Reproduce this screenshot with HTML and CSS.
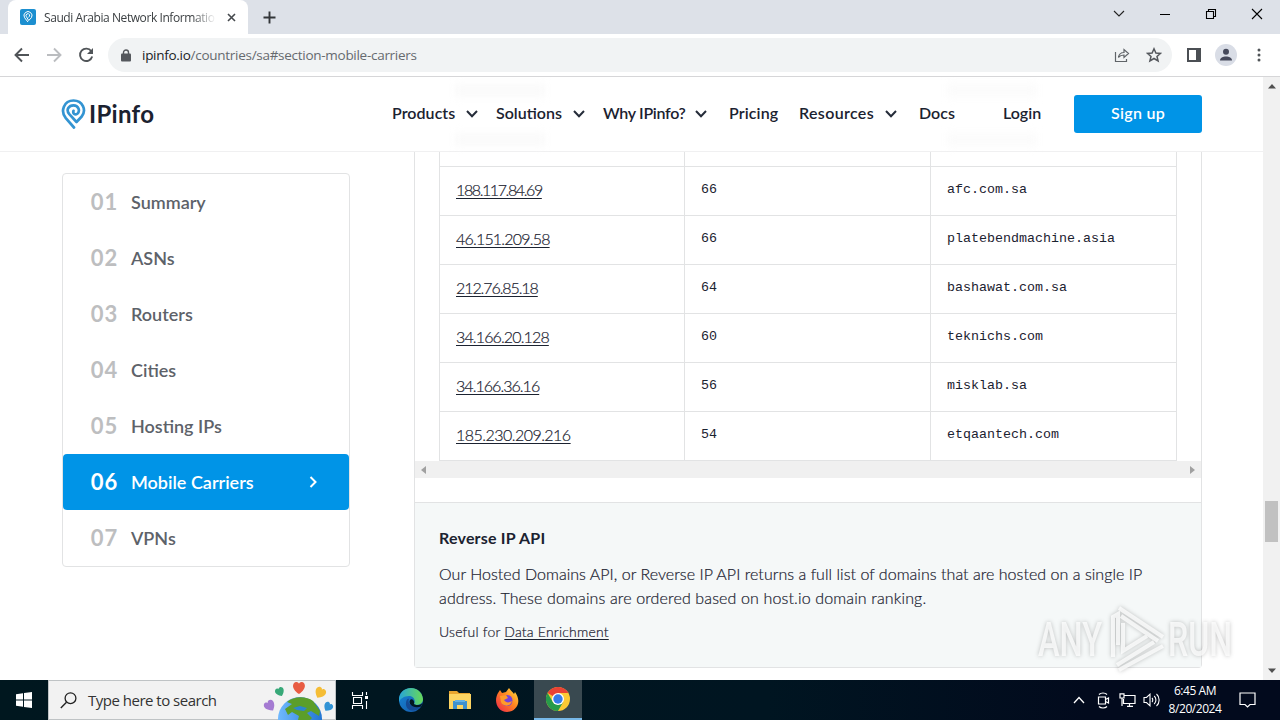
FILE: index.html
```html
<!DOCTYPE html>
<html lang="en">
<head>
  <meta charset="UTF-8" />
  <meta name="viewport" content="width=device-width, initial-scale=1" />
  <title>Saudi Arabia Network Information</title>
  <link rel="stylesheet" href="styles.css">
</head>
<body>

  <div class="tabs">
    <div class="tab">
      <svg class="favicon" width="16" height="16" viewBox="0 0 16 16"><rect width="16" height="16" rx="2" fill="#1c8fd0"/><path d="M8 13 4.6 8.7A4 4 0 1 1 11.4 8.7L8.7 11.5 6.4 7.6A1.8 1.8 0 1 1 8.4 8.2" fill="none" stroke="#fff" stroke-width="1"/></svg>
      <span class="tab-title">Saudi Arabia Network Informatio</span>
      <svg width="9" height="9" viewBox="0 0 9 9"><path d="M1 1 8 8M8 1 1 8" stroke="#45494d" stroke-width="1.6"/></svg>
    </div>
    <svg class="new-tab" width="13" height="13" viewBox="0 0 13 13"><path d="M6.500 .5V12.500M.5 6.500H12.500" stroke="#333639" stroke-width="1.9"/></svg>
    <div class="window-buttons">
      <svg width="12" height="12" viewBox="0 0 12 12"><path d="M1 3 6 8 11 3" fill="none" stroke="#222" stroke-width="1.1"/></svg>
      <svg width="12" height="12" viewBox="0 0 12 12"><path d="M1 6.500H11" stroke="#000"/></svg>
      <svg width="12" height="12" viewBox="0 0 12 12"><path d="M1.500 3.500H8.500V10.500H1.500ZM3.500 3.500V1.500H10.500V8.500H8.500" fill="none" stroke="#000" stroke-width="1.1"/></svg>
      <svg width="12" height="12" viewBox="0 0 12 12"><path d="M1 1 11 11M11 1 1 11" stroke="#000" stroke-width="1.1"/></svg>
    </div>
  </div>

  <div class="toolbar">
    <svg class="nav-icon" width="16" height="16" viewBox="0 0 16 16"><path d="M15 8H2M8 1.500 1.500 8 8 14.500" fill="none" stroke="#505458" stroke-width="1.900"/></svg>
    <svg class="nav-icon" width="16" height="16" viewBox="0 0 16 16"><path d="M1 8H14M8 1.500 14.500 8 8 14.500" fill="none" stroke="#bbbdc0" stroke-width="1.900"/></svg>
    <svg class="nav-icon" width="16" height="16" viewBox="0 0 16 16"><path d="M13.300 4.200A6.200 6.200 0 1 0 14.200 9.500" fill="none" stroke="#505458" stroke-width="1.900"/><path d="M15 1V7H9Z" fill="#505458"/></svg>
    <div class="address">
      <svg width="10" height="13" viewBox="0 0 10 13"><rect y="4.500" width="10" height="8" rx="1" fill="#55585d"/><path d="M2.500 5V3.500a2.500 2.500 0 0 1 5 0V5" fill="none" stroke="#55585d" stroke-width="1.400"/></svg>
      <span class="url"><b>ipinfo.io</b>/countries/sa#section-mobile-carriers</span>
      <svg class="share" width="16" height="16" viewBox="0 0 16 16"><path d="M1.500 5V14.500H12.500V12M4.500 10.500C5 7 7 5.500 10 5.500V2.500L14.500 6.500 10 10.500V8C7.500 8 6 8.500 4.500 10.500Z" fill="none" stroke="#606468" stroke-width="1.200"/></svg>
      <svg width="16" height="16" viewBox="0 0 16 16"><path d="M8 1.800 9.900 6 14.500 6.400 11 9.400 12.100 14 8 11.500 3.900 14 5 9.400 1.500 6.400 6.100 6Z" fill="none" stroke="#55585d" stroke-width="1.500"/></svg>
    </div>
    <svg class="panel" width="14" height="14" viewBox="0 0 14 14"><rect x="1" y="1" width="12" height="12" fill="none" stroke="#4b4f54" stroke-width="2"/><path d="M9 1H13V13H9Z" fill="#4b4f54"/></svg>
    <svg class="profile" width="22" height="22" viewBox="0 0 22 22"><circle cx="11" cy="11" r="11" fill="#d9dde6"/><circle cx="11" cy="7.800" r="3" fill="#45495b"/><path d="M5 16.500C5 11.300 17 11.300 17 16.500Z" fill="#45495b"/></svg>
    <svg width="4" height="14" viewBox="0 0 4 14"><circle cx="2" cy="2" r="1.500" fill="#505458"/><circle cx="2" cy="7" r="1.500" fill="#505458"/><circle cx="2" cy="12" r="1.500" fill="#505458"/></svg>
  </div>

  <div class="viewport">
    <div class="page">
      <header>
        <div class="ghost"></div>
        <div class="logo">
          <svg width="25" height="32" viewBox="0 0 25 32"><path d="M13 29.500 4.800 20.200C-1 13 3 2.500 12.500 2.500 21.500 2.500 26 12 20.500 18.800L15.500 24 8.300 16.200C4.500 11.500 8 7.300 12.500 7.300 17.500 7.300 19.500 13 16.300 15.700 14 17.500 11.500 15.500 12.500 12.800" fill="none" stroke="#3394d2" stroke-width="2.700" stroke-linejoin="round" stroke-linecap="round"/></svg>
          <span>IPinfo</span>
        </div>
        <nav>
          <a class="products">Products<svg class="chevron" viewBox="0 0 12 8"><path d="M1 1 6 6.200 11 1"/></svg></a>
          <a class="solutions">Solutions<svg class="chevron" viewBox="0 0 12 8"><path d="M1 1 6 6.200 11 1"/></svg></a>
          <a class="why">Why IPinfo?<svg class="chevron wide" viewBox="0 0 12 8"><path d="M1 1 6 6.200 11 1"/></svg></a>
          <a class="pricing">Pricing</a>
          <a class="resources">Resources<svg class="chevron wide" viewBox="0 0 12 8"><path d="M1 1 6 6.200 11 1"/></svg></a>
          <a class="docs">Docs</a>
          <a class="login">Login</a>
          <a class="btn">Sign up</a>
        </nav>
      </header>

      <main>
        <aside>
          <a><i>01</i>Summary</a>
          <a><i>02</i>ASNs</a>
          <a><i>03</i>Routers</a>
          <a><i>04</i>Cities</a>
          <a><i>05</i>Hosting IPs</a>
          <a class="active"><i>06</i>Mobile Carriers<svg width="8" height="12" viewBox="0 0 8 12"><path d="M1.500 1 6.500 6 1.500 11" fill="none" stroke="#fff" stroke-width="2"/></svg></a>
          <a><i>07</i>VPNs</a>
        </aside>

        <section class="card">
          <div class="table">
            <div class="row cut"><div></div><div></div><div></div></div>
            <div class="row"><div><u>188.117.84.69</u></div><div>66</div><div>afc.com.sa</div></div>
            <div class="row"><div><u>46.151.209.58</u></div><div>66</div><div>platebendmachine.asia</div></div>
            <div class="row"><div><u>212.76.85.18</u></div><div>64</div><div>bashawat.com.sa</div></div>
            <div class="row"><div><u>34.166.20.128</u></div><div>60</div><div>teknichs.com</div></div>
            <div class="row"><div><u>34.166.36.16</u></div><div>56</div><div>misklab.sa</div></div>
            <div class="row last"><div><u>185.230.209.216</u></div><div>54</div><div>etqaantech.com</div></div>
          </div>
          <div class="hscroll">
            <svg width="5" height="8" viewBox="0 0 5 8"><path d="M5 0V8L0 4Z" fill="#a0a0a0"/></svg>
            <svg width="5" height="8" viewBox="0 0 5 8"><path d="M0 0V8L5 4Z" fill="#a0a0a0"/></svg>
          </div>
          <div class="api">
            <h3>Reverse IP API</h3>
            <p><span class="line1">Our Hosted Domains API, or Reverse IP API returns a full list of domains that are hosted on a single IP</span><br><span class="line2">address. These domains are ordered based on host.io domain ranking.</span></p>
            <div class="useful">Useful for <u>Data Enrichment</u></div>
          </div>
        </section>
      </main>
    </div>

    <div class="vscroll">
      <svg width="8" height="5" viewBox="0 0 8 5"><path d="M0 4.500H8L4 0Z" fill="#505050"/></svg>
      <div class="thumb"></div>
      <svg width="8" height="5" viewBox="0 0 8 5"><path d="M0 .5H8L4 5Z" fill="#505050"/></svg>
    </div>

    <svg class="watermark" width="220" height="74" viewBox="0 0 220 74">
      <text x="8" y="51" textLength="64" lengthAdjust="spacingAndGlyphs">ANY</text>
      <path d="M83 52V12L88 9V40M89 3 133 32M91 11 128 36M93 18V46L117 31M133 41 89 65M124 37 87 60"/>
      <text x="138" y="51" textLength="64" lengthAdjust="spacingAndGlyphs">RUN</text>
    </svg>
  </div>

  <footer>
    <div class="start"><svg width="16" height="16" viewBox="0 0 16 16"><path d="M0 2.300 7 1.300V7.500H0ZM8 1.100 16 0V7.500H8ZM0 8.500H7V14.700L0 13.700ZM8 8.500H16V16L8 14.900Z" fill="#fff"/></svg></div>
    <div class="search">
      <svg width="17" height="17" viewBox="0 0 17 17"><circle cx="10.500" cy="6.200" r="5.400" fill="none" stroke="#222" stroke-width="1.300"/><path d="M6.500 10.200.8 16" stroke="#222" stroke-width="1.400"/></svg>
      <span>Type here to search</span>
      <svg class="earth" width="72" height="40" viewBox="0 0 72 40">
        <defs>
          <path id="heart" d="M0 6C-9 0-6-6-2.500-6-1-6 0-5 0-4 0-5 1-6 2.500-6 6-6 9 0 0 6Z"/>
          <linearGradient id="sea"><stop stop-color="#70b9ff"/><stop offset="1" stop-color="#2376d2"/></linearGradient>
        </defs>
        <circle cx="37" cy="39" r="22" fill="url(#sea)"/>
        <path d="M24 22C31 16 43 16 50 21L57 31 56 36 48 31 44 33 49 38 47 40H35L36 36 29 32 25 35 22 29 29 24Z" fill="#5b9e2a"/>
        <path d="M30 28 37 26 44 28 41 31 34 30Z" fill="#2c86cf"/>
        <use href="#heart" transform="translate(36 8)" fill="#e85c43"/>
        <use href="#heart" transform="translate(17 12) rotate(-25) scale(.75)" fill="#37a878"/>
        <use href="#heart" transform="translate(57 13) rotate(30) scale(.9)" fill="#f5bd35"/>
        <use href="#heart" transform="translate(7 26) rotate(-35) scale(.9)" fill="#a57bd2"/>
        <use href="#heart" transform="translate(65 27) rotate(35) scale(.75)" fill="#3193d5"/>
      </svg>
    </div>
    <div class="task"><svg width="18" height="17" viewBox="0 0 18 17"><path d="M1.500 0V3.500H11.500V0M1.500 17V13.500H11.500V17M2.500 5.500H10.500V11.500H2.500ZM15.500 0V3M15.500 9V17" fill="none" stroke="#fff" stroke-width="1.100"/><path d="M14 4H17V7H14Z" fill="#fff"/></svg></div>
    <div class="task edge"><svg width="24" height="24" viewBox="0 0 24 24">
      <defs><linearGradient id="eg1"><stop stop-color="#27a5d8"/><stop offset="1" stop-color="#68d957"/></linearGradient><linearGradient id="eg2" y2="1"><stop stop-color="#1688d8"/><stop offset="1" stop-color="#1557a8"/></linearGradient></defs>
      <circle cx="12" cy="12" r="12" fill="url(#eg2)"/>
      <path d="M0 10C2-3 22-4 24 11 24 17 17 18 15 16 17 13 15 8 10 8 5 8 1 11 0 14Z" fill="url(#eg1)"/>
      <path d="M10 11C8 15 12 20 22 18 18 25 6 24 7 15 7 12 9 10 10 11Z" fill="#154a94"/>
      <path d="M15 16C17 18 22 17 23.500 15L22 18.500C14 21 9 16 11 12 13 10 16 13 15 16Z" fill="#021621"/>
    </svg></div>
    <div class="task files"><svg width="22" height="20" viewBox="0 0 22 20"><path d="M0 1H8L10 3H21V8H0Z" fill="#e8a52f"/><path d="M0 4H22V19H0Z" fill="#fcd462"/><path d="M4 11H18V19H14V15H8V19H4Z" fill="#3f91cf"/><path d="M6 10H16V12H6Z" fill="#65b2e5"/></svg></div>
    <div class="task firefox"><svg width="24" height="24" viewBox="0 0 24 24">
      <defs><linearGradient id="fox" x1="1" y1="0" x2="0" y2="1"><stop stop-color="#ffe443"/><stop offset=".45" stop-color="#ff851f"/><stop offset="1" stop-color="#ee204f"/></linearGradient></defs>
      <path d="M3 5 5 2 7 5 11 4 14 0C16 3 18 4 19 6L20 4C28 15 20 24 12 24 3 24-2 14 3 5Z" fill="url(#fox)"/>
      <circle cx="12" cy="12.500" r="5.500" fill="#7642d8"/><path d="M5 8 11 7 13 10 9 12C11 15 14 15 17 13 15 20 7 18 6 14Z" fill="#ff9b29"/>
    </svg></div>
    <div class="task current"><svg width="24" height="24" viewBox="0 0 24 24"><circle cx="12" cy="12" r="12" fill="#fcc934"/><path d="M12 12 1.600 6A12 12 0 0 1 22.400 6H12Z" fill="#e94235"/><path d="M1.600 6 7 15.300 12 17.500 17.200 15 12 24A12 12 0 0 1 1.600 6Z" fill="#279b4a"/><circle cx="12" cy="12" r="6" fill="#fff"/><circle cx="12" cy="12" r="4.700" fill="#367be9"/></svg></div>
    <div class="tray">
      <svg width="12" height="8" viewBox="0 0 12 8"><path d="M1 7 6 1.500 11 7" fill="none" stroke="#fff" stroke-width="1.300"/></svg>
      <svg class="meet" width="13" height="17" viewBox="0 0 13 17"><path d="M2 2.500C4 .5 8 .5 10 2.500M2 14.500C4 16.500 8 16.500 10 14.500M1.500 5H8.500V12H1.500ZM8.500 7.500 11.500 6V11L8.500 9.500" fill="none" stroke="#fff" stroke-width="1.200"/></svg>
      <svg class="network" width="17" height="14" viewBox="0 0 17 14"><path d="M5 2.500H16V10.500H4.500V6M1 .8H5V5H1ZM3 5V13M8 13.300H14M10.500 10.500V13" fill="none" stroke="#fff" stroke-width="1.200"/></svg>
      <svg class="sound" width="17" height="14" viewBox="0 0 17 14"><path d="M1 4.500H3.500L7 1.200V12.800L3.500 9.500H1ZM9 5C10 6 10 8 9 9M11.200 3C13.500 5 13.500 9 11.200 11M13.500 1C17 4 17 10 13.500 13" fill="none" stroke="#fff" stroke-width="1.100"/></svg>
      <div class="clock"><span>6:45 AM</span><span>8/20/2024</span></div>
      <svg class="notice" width="17" height="16" viewBox="0 0 17 16"><path d="M1 1H16V12.500H11L8.500 15 6 12.500H1Z" fill="none" stroke="#fff" stroke-width="1.200"/></svg>
    </div>
  </footer>

</body>
</html>
```
FILE: styles.css
```css
:root {
  --blue: #0094e7;
  --text: #1b2230;
  --line: #e2e3e4;
}

* {
  box-sizing: border-box;
}

body {
  margin: 0;
  width: 1280px;
  height: 720px;
  overflow: hidden;
  font-family: Lato, "Liberation Sans", sans-serif;
  background: white;
  color: var(--text);
}

svg {
  display: block;
  flex: none;
}

/* browser window */
.tabs {
  height: 34px;
  background: #dde1e8;
  display: flex;
  align-items: center;
}

.tab {
  width: 240px;
  height: 34px;
  margin-left: 8px;
  padding: 0 12px;
  background: white;
  border-radius: 8px 8px 0 0;
  display: flex;
  align-items: center;
}

.tab-title {
  width: 172px;
  margin: 0 11px 0 8px;
  white-space: nowrap;
  font: 12px "Open Sans", sans-serif;
  letter-spacing: -0.42px;
  color: #3c4043;
  mask-image: linear-gradient(to right, black 86%, transparent 100%);
}

.new-tab {
  margin-left: 15px;
}

.window-buttons {
  margin-left: auto;
  margin-right: 17px;
  display: flex;
  gap: 34px;
  margin-top: -6px;
}

.toolbar {
  height: 43px;
  border-bottom: 1px solid #d6d6d8;
  background: white;
  display: flex;
  align-items: center;
  padding-left: 14px;
}

.nav-icon {
  margin-right: 16px;
}

.address {
  width: 1064px;
  height: 34px;
  margin-left: -2px;
  border-radius: 17px;
  background: #f1f3f4;
  display: flex;
  align-items: center;
  padding: 0 10px 0 13px;
}

.url {
  margin-left: 11px;
  font: 13.5px "Open Sans", sans-serif;
  letter-spacing: -0.28px;
  color: #666a6f;
}

.url b {
  font-weight: normal;
  color: #202124;
}

.share {
  margin-left: auto;
  margin-right: 16px;
}

.panel {
  margin-left: 15px;
}

.profile {
  margin: 0 20px 0 14px;
}

.viewport {
  position: relative;
  display: flex;
  height: 603px;
}

.page {
  width: 1263px;
  height: 603px;
  overflow: hidden;
}

header {
  position: relative;
  height: 75px;
  border-bottom: 1px solid #f0f0f1;
  background: white;
  display: flex;
  align-items: center;
  padding-left: 61px;
}

/* rows showing faintly through the sticky header */
.ghost {
  position: absolute;
  left: 455px;
  top: 7px;
  width: 90px;
  height: 13px;
  background: #fafafa;
  filter: blur(4px);
  box-shadow: 0 49px #fafafa, 492px 0 #fbfbfb, 492px 49px #fbfbfb;
}

.logo {
  position: relative;
  width: 331px;
  display: flex;
  align-items: center;
}

.logo span {
  margin: -2px 0 0 3px;
  font-size: 24px;
  font-weight: bold;
  letter-spacing: 0.3px;
}

nav {
  position: relative;
  display: flex;
  align-items: center;
  font-size: 16px;
  line-height: 20px;
  font-weight: 600;
}

nav a {
  display: flex;
  align-items: center;
  white-space: nowrap;
  padding-bottom: 2px;
}

.chevron {
  width: 12px;
  height: 8px;
  margin-left: auto;
  margin-right: 18px;
  margin-top: 2px;
  fill: none;
  stroke: #252c39;
  stroke-width: 2;
}

.chevron.wide {
  margin-right: 22px;
}

.products { width: 104px; letter-spacing: 0.05px; }
.solutions { width: 107px; }
.why { width: 126px; letter-spacing: -0.3px; }
.pricing { width: 70px; letter-spacing: 0.1px; }
.resources { width: 120px; letter-spacing: 0.35px; }
.docs { width: 84px; }
.login { width: 71px; }

nav .btn {
  width: 128px;
  height: 38px;
  letter-spacing: 0.3px;
  justify-content: center;
  border-radius: 3px;
  background: var(--blue);
  color: white;
}

main {
  display: flex;
  align-items: flex-start;
  padding-left: 62px;
}

aside {
  width: 288px;
  margin-top: 21px;
  border: 1px solid var(--line);
  border-radius: 4px;
}

aside a {
  height: 56px;
  padding: 0 0 1px 27px;
  display: flex;
  align-items: center;
  font-size: 18px;
  font-weight: 600;
  color: #5d6269;
}

aside i {
  width: 29px;
  margin: -1px 12px 0 0;
  text-align: center;
  font-style: normal;
  font-size: 22px;
  letter-spacing: 1px;
  font-weight: bold;
  color: #bdbec0;
}

aside .active {
  background: var(--blue);
  border-radius: 4px;
  color: white;
}

.active i {
  color: white;
}

.active svg {
  margin-left: auto;
  margin-right: 32px;
}

.card {
  width: 788px;
  height: 516px;
  margin-left: 64px;
  border: 1px solid var(--line);
  border-top: 0;
  border-radius: 0 0 4px 4px;
}

.table {
  margin: 0 24px;
  border-right: 1px solid var(--line);
}

.row {
  height: 49px;
  display: grid;
  grid-template-columns: 245px 246px 246px;
  border-top: 1px solid var(--line);
}

.row.cut {
  height: 14px;
  border-top: 0;
}

.row.last {
  height: 50px;
  border-bottom: 1px solid var(--line);
}

.row div {
  border-left: 1px solid var(--line);
  padding: 15px 16px 0;
  font: 13.33px/16px "Liberation Mono", monospace;
}

.row div:first-child {
  padding-top: 11px;
  font: 300 16px/24px Lato, sans-serif;
  -webkit-text-stroke: 0.2px var(--text);
}

/* tighten the digits row by row */
.row:nth-child(2) u { letter-spacing: -1.4px; }
.row:nth-child(3) u { letter-spacing: -0.8px; }
.row:nth-child(4) u { letter-spacing: -1.08px; }
.row:nth-child(5) u { letter-spacing: -0.86px; }
.row:nth-child(6) u { letter-spacing: -0.96px; }
.row:nth-child(7) u { letter-spacing: -0.53px; }

u {
  text-underline-offset: 2px;
  text-decoration-thickness: 1px;
}

.hscroll {
  height: 17px;
  padding: 0 6px;
  background: #f0f0f0;
  display: flex;
  align-items: center;
  justify-content: space-between;
}

.api {
  height: 165px;
  margin-top: 24px;
  padding: 23px 24px;
  border-top: 1px solid var(--line);
  background: #f5f8f8;
}

.api h3 {
  margin: 0;
  font-size: 16px;
  line-height: 24px;
  letter-spacing: 0.2px;
}

.api p {
  margin: 12px 0;
  font-size: 16px;
  font-weight: 300;
  line-height: 24px;
  white-space: nowrap;
  -webkit-text-stroke: 0.2px var(--text);
}

.line1 {
  letter-spacing: 0.04px;
}

.line2 {
  letter-spacing: 0.14px;
}

.useful {
  font-size: 14px;
  font-weight: 300;
  line-height: 20px;
  letter-spacing: 0.2px;
  -webkit-text-stroke: 0.2px var(--text);
}

.vscroll {
  width: 17px;
  height: 603px;
  background: #f1f1f1;
  display: flex;
  flex-direction: column;
  align-items: center;
  padding: 7px 0;
}

.thumb {
  width: 13px;
  height: 41px;
  margin-top: 412px;
  margin-bottom: auto;
  background: #c1c1c1;
}

.watermark {
  position: absolute;
  left: 1030px;
  top: 528px;
  overflow: visible;
  fill: none;
  stroke: rgba(255, 255, 255, 0.75);
  stroke-width: 4;
  filter: drop-shadow(0 0 2px rgba(0, 0, 0, 0.3));
}

.watermark text {
  font: 500 48px Roboto, sans-serif;
  fill: rgba(255, 255, 255, 0.75);
  stroke: none;
}

/* taskbar */
footer {
  height: 40px;
  display: flex;
  background: linear-gradient(to right, #00171f, #001521 60%, #020a1d 85%);
  color: white;
}

.start {
  width: 48px;
  display: grid;
  place-items: center;
}

.search {
  width: 288px;
  background: #f2f2f2;
  border: 1px solid #bfc3c5;
  display: flex;
  align-items: center;
  padding-left: 11px;
}

.search span {
  width: 182px;
  margin-left: 11px;
  font: 15px "Open Sans", sans-serif;
  letter-spacing: -0.5px;
  color: #333;
}

.earth {
  margin-left: -1px;
}

.task {
  width: 48px;
  display: grid;
  place-items: center;
}

.task.edge {
  width: 54px;
}

.task.files {
  width: 44px;
}

.task.firefox {
  width: 52px;
  padding-right: 3px;
}

.task.current {
  background: #394950;
  border-bottom: 2px solid #77b8e8;
}

.tray {
  margin-left: auto;
  width: 207px;
  display: flex;
  align-items: center;
}

.meet { margin-left: 12px; }
.network { margin-left: 9px; }
.sound { margin-left: 7px; }

.clock {
  width: 70px;
  display: flex;
  flex-direction: column;
  align-items: center;
  font: 12px/18px "Open Sans", sans-serif;
  letter-spacing: -0.45px;
}

.notice {
  margin-left: 9px;
}
```
